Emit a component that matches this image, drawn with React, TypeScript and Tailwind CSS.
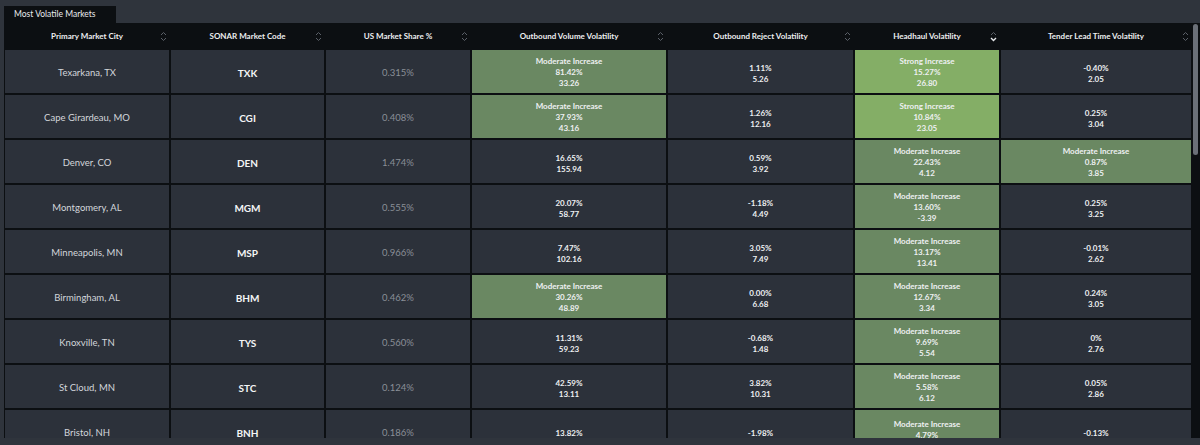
import React from "react"

type Cell = { lines: string[]; tone?: "mod" | "strong"; lift?: boolean }

type Row = {
  city: string
  code: string
  share: string
  outVol: Cell
  outRej: Cell
  head: Cell
  tender: Cell
}

const M = "Moderate Increase"
const S = "Strong Increase"

const rows: Row[] = [
  { city: "Texarkana, TX", code: "TXK", share: "0.315%", outVol: { lines: [M, "81.42%", "33.26"], tone: "mod" }, outRej: { lines: ["1.11%", "5.26"] }, head: { lines: [S, "15.27%", "26.80"], tone: "strong" }, tender: { lines: ["-0.40%", "2.05"] } },
  { city: "Cape Girardeau, MO", code: "CGI", share: "0.408%", outVol: { lines: [M, "37.93%", "43.16"], tone: "mod" }, outRej: { lines: ["1.26%", "12.16"] }, head: { lines: [S, "10.84%", "23.05"], tone: "strong" }, tender: { lines: ["0.25%", "3.04"] } },
  { city: "Denver, CO", code: "DEN", share: "1.474%", outVol: { lines: ["16.65%", "155.94"] }, outRej: { lines: ["0.59%", "3.92"] }, head: { lines: [M, "22.43%", "4.12"], tone: "mod" }, tender: { lines: [M, "0.87%", "3.85"], tone: "mod" } },
  { city: "Montgomery, AL", code: "MGM", share: "0.555%", outVol: { lines: ["20.07%", "58.77"] }, outRej: { lines: ["-1.18%", "4.49"] }, head: { lines: [M, "13.60%", "-3.39"], tone: "mod" }, tender: { lines: ["0.25%", "3.25"] } },
  { city: "Minneapolis, MN", code: "MSP", share: "0.966%", outVol: { lines: ["7.47%", "102.16"] }, outRej: { lines: ["3.05%", "7.49"] }, head: { lines: [M, "13.17%", "13.41"], tone: "mod" }, tender: { lines: ["-0.01%", "2.62"] } },
  { city: "Birmingham, AL", code: "BHM", share: "0.462%", outVol: { lines: [M, "30.26%", "48.89"], tone: "mod" }, outRej: { lines: ["0.00%", "6.68"] }, head: { lines: [M, "12.67%", "3.34"], tone: "mod" }, tender: { lines: ["0.24%", "3.05"] } },
  { city: "Knoxville, TN", code: "TYS", share: "0.560%", outVol: { lines: ["11.31%", "59.23"] }, outRej: { lines: ["-0.68%", "1.48"] }, head: { lines: [M, "9.69%", "5.54"], tone: "mod" }, tender: { lines: ["0%", "2.76"] } },
  { city: "St Cloud, MN", code: "STC", share: "0.124%", outVol: { lines: ["42.59%", "13.11"] }, outRej: { lines: ["3.82%", "10.31"] }, head: { lines: [M, "5.58%", "6.12"], tone: "mod" }, tender: { lines: ["0.05%", "2.86"] } },
  // last row is cut by the scroll area, only the visible lines are kept
  { city: "Bristol, NH", code: "BNH", share: "0.186%", outVol: { lines: ["13.82%"] }, outRej: { lines: ["-1.98%"] }, head: { lines: [M, "4.79%"], tone: "mod", lift: true }, tender: { lines: ["-0.13%"] } },
]

const headers = [
  "Primary Market City",
  "SONAR Market Code",
  "US Market Share %",
  "Outbound Volume Volatility",
  "Outbound Reject Volatility",
  "Headhaul Volatility",
  "Tender Lead Time Volatility",
]

const cols = "grid-cols-[164px_153px_144px_194px_185px_144px_190px]"

function SortIcon({ active }: { active?: boolean }) {
  return (
    <svg width="7" height="11" viewBox="0 0 7 11" className="absolute right-[2px] top-[8px]">
      <path d="M1 4 L3.5 1.5 L6 4" fill="none" stroke="#5b6068" strokeWidth="1" />
      <path d="M1 7 L3.5 9.5 L6 7" fill="none" stroke={active ? "#e6e8eb" : "#5b6068"} strokeWidth={active ? 1.4 : 1} />
    </svg>
  )
}

function DataCell({ cell }: { cell: Cell }) {
  const bg = cell.tone === "strong" ? "bg-[#84ae66]" : cell.tone === "mod" ? "bg-[#6a8862]" : "bg-[#2c313a]"
  const pad = cell.lift ? "pb-[4px]" : cell.lines.length < 3 ? "pt-[4px]" : "pt-[1px]"
  return (
    <div className={`${bg} ${pad} flex flex-col items-center justify-center text-[8px] leading-[11px] font-bold text-[#eef0f2]`}>
      {cell.lines.map((l, i) => (
        <span key={i}>{l}</span>
      ))}
    </div>
  )
}

export default function App() {
  return (
    <div className="h-[445px] bg-[#2f343c] pt-[6px] pl-[4px] overflow-hidden" style={{ fontFamily: 'Lato, "Open Sans", sans-serif' }}>
      <div className="w-[112px] h-[17px] bg-[#0c0f12] pl-[10px] text-[8.5px] leading-[17px] text-[#e8eaed]">Most Volatile Markets</div>
      <div className="flex h-[415px] overflow-hidden bg-[#0c0f12]">
        <div className="pl-[1px]">
          <div className={`grid ${cols} gap-x-[2px] h-[26px] mb-[1px]`}>
            {headers.map((h, i) => (
              <div key={h} className="relative flex items-center justify-center text-[8px] font-bold text-[#eceef0]">
                {h}
                <SortIcon active={i === 5} />
              </div>
            ))}
          </div>
          <div className={`grid ${cols} gap-[2px] auto-rows-[43px]`}>
            {rows.map((r) => (
              <React.Fragment key={r.code}>
                <div className="bg-[#2c313a] pt-[4px] flex items-center justify-center text-[9.5px] text-[#d3d6da]">{r.city}</div>
                <div className="bg-[#2c313a] pt-[4px] flex items-center justify-center text-[10px] font-bold text-[#f4f5f6]">{r.code}</div>
                <div className="bg-[#2c313a] pt-[4px] flex items-center justify-center text-[9.5px] text-[#8a8f97]">{r.share}</div>
                <DataCell cell={r.outVol} />
                <DataCell cell={r.outRej} />
                <DataCell cell={r.head} />
                <DataCell cell={r.tender} />
              </React.Fragment>
            ))}
          </div>
        </div>
        <div className="w-[9px] pt-[1px] pl-[2px]">
          <div className="w-[5px] h-[131px] rounded-full bg-[#6b7078]" />
        </div>
      </div>
    </div>
  )
}
